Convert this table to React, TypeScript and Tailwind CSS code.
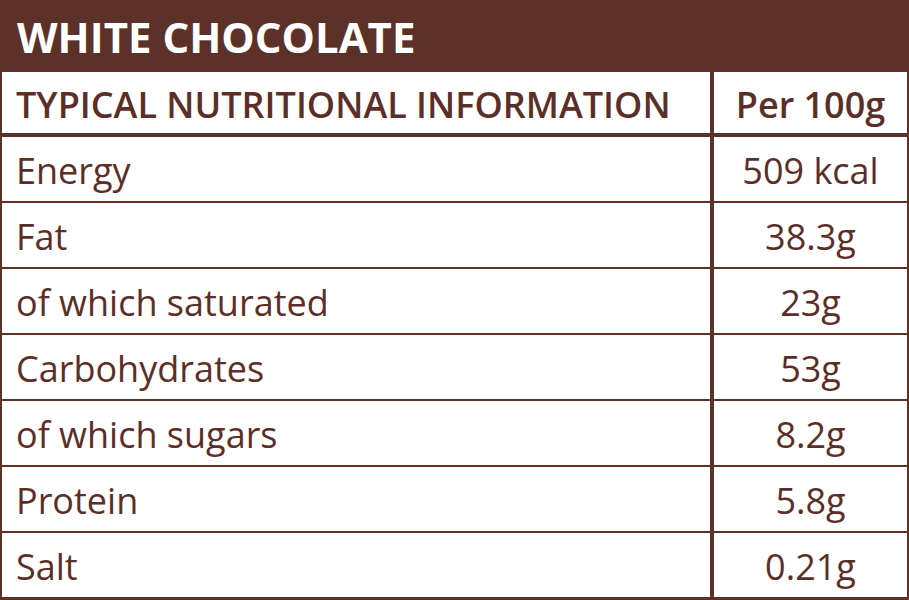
const rows = [
  { name: "Energy", value: "509 kcal" },
  { name: "Fat", value: "38.3g" },
  { name: "of which saturated", value: "23g" },
  { name: "Carbohydrates", value: "53g" },
  { name: "of which sugars", value: "8.2g" },
  { name: "Protein", value: "5.8g" },
  { name: "Salt", value: "0.21g" },
];

export default function App() {
  return (
    <div
      className="w-[909px] h-[600px] bg-white text-[#5b2f27] overflow-hidden"
      style={{ fontFamily: '"Open Sans", sans-serif' }}
    >
      {/* Title bar */}
      <div className="h-[72px] bg-[#5b3128] flex items-center pl-[17px] pt-[2px]">
        <h1 className="text-[42px] font-bold text-white leading-none">WHITE CHOCOLATE</h1>
      </div>

      <div className="border-x-[2px] border-b-[3px] border-[#5b3128]">
        {/* Head row */}
        <div className="flex h-[65px] border-b-[4px] border-[#5b3128]">
          <div className="flex-1 flex items-center pl-[14px] pt-[4px] text-[36px] font-semibold leading-none">
            TYPICAL NUTRITIONAL INFORMATION
          </div>
          <div className="w-[197px] border-l-[4px] border-[#5b3128] flex items-center justify-center pt-[4px] text-[36px] font-semibold leading-none">
            Per 100g
          </div>
        </div>

        {rows.map((row, i) => (
          <div
            key={row.name}
            className={`flex ${i < rows.length - 1 ? "h-[66px] border-b-[2px] border-[#5b3128]" : "h-[64px]"}`}
          >
            <div className="flex-1 flex items-center pl-[14px] pt-[4px] text-[36px] leading-none">{row.name}</div>
            <div className="w-[197px] border-l-[4px] border-[#5b3128] flex items-center justify-center pt-[4px] text-[36px] leading-none">
              {row.value}
            </div>
          </div>
        ))}
      </div>
    </div>
  );
}
